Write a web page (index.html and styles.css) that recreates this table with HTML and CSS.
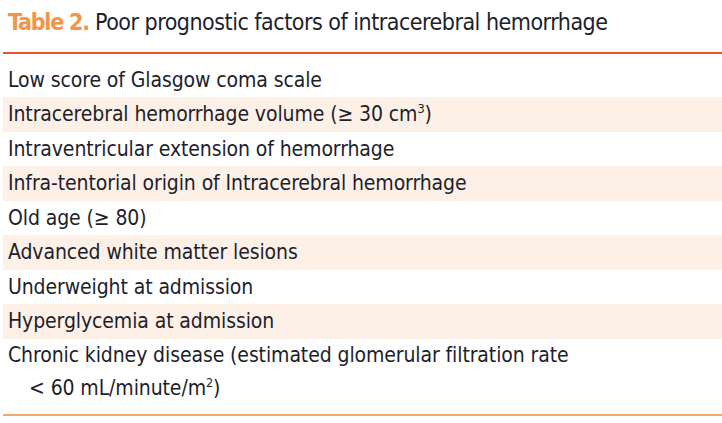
FILE: index.html
```html
<!DOCTYPE html>
<html>
<head>
<meta charset="utf-8">
<link rel="stylesheet" href="styles.css">
</head>
<body>
<div class="caption"><span class="label">Table 2.</span> Poor prognostic factors of intracerebral hemorrhage</div>
<div class="table">
  <div class="row first">Low score of Glasgow coma scale</div>
  <div class="row shade">Intracerebral hemorrhage volume (≥ 30 cm<sup>3</sup>)</div>
  <div class="row">Intraventricular extension of hemorrhage</div>
  <div class="row shade">Infra-tentorial origin of Intracerebral hemorrhage</div>
  <div class="row">Old age (≥ 80)</div>
  <div class="row shade">Advanced white matter lesions</div>
  <div class="row">Underweight at admission</div>
  <div class="row shade">Hyperglycemia at admission</div>
  <div class="row last">
    <div>Chronic kidney disease (estimated glomerular filtration rate</div>
    <div class="indent">&lt; 60 mL/minute/m<sup>2</sup>)</div>
  </div>
</div>
</body>
</html>
```
FILE: styles.css
```css
html, body {
  margin: 0;
  padding: 0;
  background: #ffffff;
}
body {
  font-family: "DejaVu Sans Condensed", "Liberation Sans", sans-serif;
  color: #211e2c;
}
.caption {
  font-size: 23px;
  letter-spacing: -0.5px;
  line-height: 30px;
  padding: 7px 0 0 8px;
  box-sizing: border-box;
  height: 52px;
  white-space: nowrap;
}
.label {
  color: #f39447;
  font-weight: bold;
  letter-spacing: -1.2px;
}
.table {
  margin-left: 3px;
  border-top: 2px solid #e8552a;
  border-bottom: 2px solid #f6a86c;
}
.row {
  font-size: 21px;
  letter-spacing: -0.1px;
  line-height: 34.5px;
  padding-left: 5px;
  white-space: nowrap;
}
.row.first {
  padding-top: 8.5px;
}
.row.shade {
  background: #fdf1e7;
}
.row.last {
  line-height: 33px;
  padding-bottom: 9px;
}
.indent {
  padding-left: 21px;
}
sup {
  font-size: 0.6em;
  line-height: 0;
  vertical-align: 0.6em;
}
```
